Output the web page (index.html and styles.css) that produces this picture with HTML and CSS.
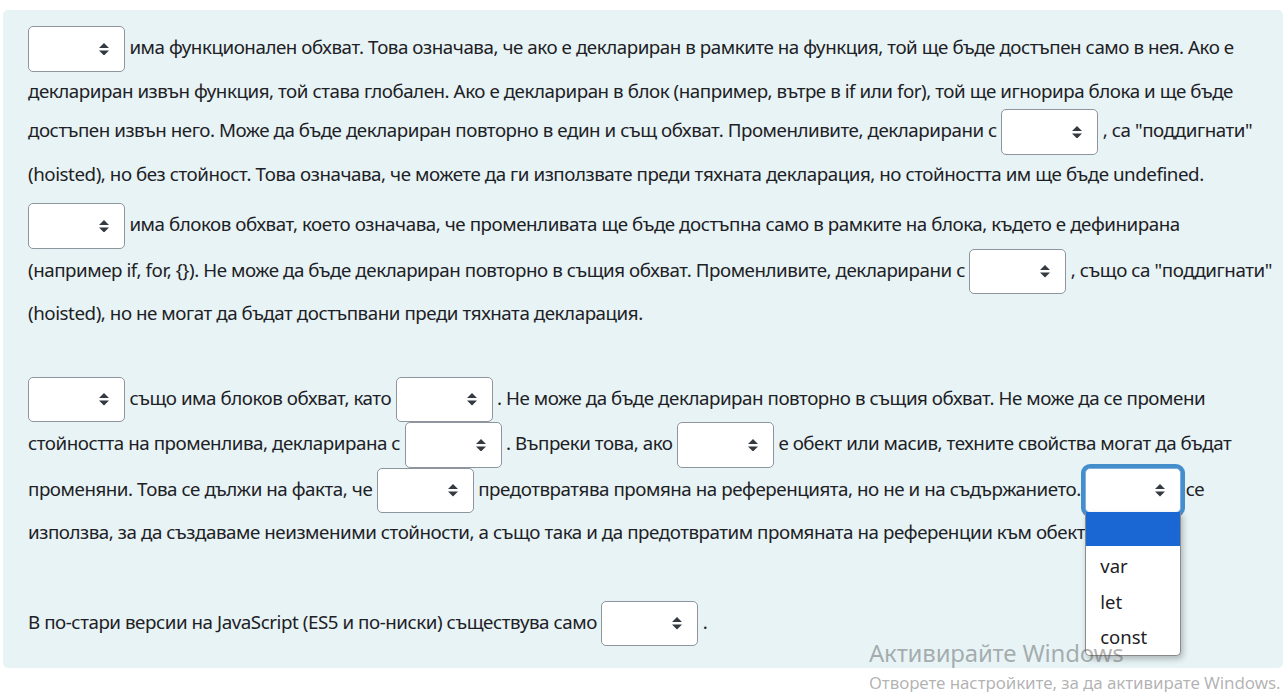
FILE: index.html
```html
<!DOCTYPE html>
<html lang="bg">
<head>
<meta charset="utf-8">
<title>Обхват на променливите</title>
<link rel="stylesheet" href="styles.css">
</head>
<body>
<div class="que">
  <p class="qtext"><span class="sel"><svg class="caret" viewBox="0 0 4 5"><path d="M2 0L0 2h4zm0 5L0 3h4z"/></svg></span> има функционален обхват. Това означава, че ако е деклариран в рамките на функция, той ще бъде достъпен само в нея. Ако е<br>деклариран извън функция, той става глобален. Ако е деклариран в блок (например, вътре в if или for), той ще игнорира блока и ще бъде<br>достъпен извън него. Може да бъде деклариран повторно в един и същ обхват. Променливите, декларирани с <span class="sel"><svg class="caret" viewBox="0 0 4 5"><path d="M2 0L0 2h4zm0 5L0 3h4z"/></svg></span> , са "поддигнати"<br>(hoisted), но без стойност. Това означава, че можете да ги използвате преди тяхната декларация, но стойността им ще бъде undefined.</p>
  <p class="qtext"><span class="sel"><svg class="caret" viewBox="0 0 4 5"><path d="M2 0L0 2h4zm0 5L0 3h4z"/></svg></span> има блоков обхват, което означава, че променливата ще бъде достъпна само в рамките на блока, където е дефинирана<br>(например if, for, {}). Не може да бъде деклариран повторно в същия обхват. Променливите, декларирани с <span class="sel"><svg class="caret" viewBox="0 0 4 5"><path d="M2 0L0 2h4zm0 5L0 3h4z"/></svg></span> , също са "поддигнати"<br>(hoisted), но не могат да бъдат достъпвани преди тяхната декларация.</p>
  <div class="blank"></div>
  <p class="qtext"><span class="sel"><svg class="caret" viewBox="0 0 4 5"><path d="M2 0L0 2h4zm0 5L0 3h4z"/></svg></span> също има блоков обхват, като <span class="sel"><svg class="caret" viewBox="0 0 4 5"><path d="M2 0L0 2h4zm0 5L0 3h4z"/></svg></span> . Не може да бъде деклариран повторно в същия обхват. Не може да се промени<br>стойността на променлива, декларирана с <span class="sel"><svg class="caret" viewBox="0 0 4 5"><path d="M2 0L0 2h4zm0 5L0 3h4z"/></svg></span> . Въпреки това, ако <span class="sel"><svg class="caret" viewBox="0 0 4 5"><path d="M2 0L0 2h4zm0 5L0 3h4z"/></svg></span> е обект или масив, техните свойства могат да бъдат<br>променяни. Това се дължи на факта, че <span class="sel"><svg class="caret" viewBox="0 0 4 5"><path d="M2 0L0 2h4zm0 5L0 3h4z"/></svg></span> предотвратява промяна на референцията, но не и на съдържанието. <span class="sel focus"><svg class="caret" viewBox="0 0 4 5"><path d="M2 0L0 2h4zm0 5L0 3h4z"/></svg><span class="menu"><span class="opt active"></span><span class="opt">var</span><span class="opt">let</span><span class="opt">const</span></span></span> се<br>използва, за да създаваме неизменими стойности, а също така и да предотвратим промяната на референции към обекти.</p>
  <div class="blank blank-lg"></div>
  <p class="qtext">В по-стари версии на JavaScript (ES5 и по-ниски) съществува само <span class="sel"><svg class="caret" viewBox="0 0 4 5"><path d="M2 0L0 2h4zm0 5L0 3h4z"/></svg></span> .</p>
</div>
<div class="watermark">
  <div class="wm-title">Активирайте Windows</div>
  <div class="wm-sub">Отворете настройките, за да активирате Windows.</div>
</div>
</body>
</html>
```
FILE: styles.css
```css
html, body {
  margin: 0;
  padding: 0;
  overflow: hidden;
  background: #ffffff;
}
body {
  font-family: "Noto Sans", "Open Sans", sans-serif;
  color: #1d2125;
  width: 1283px;
  height: 692px;
  position: relative;
}
.que {
  margin: 10px 0 0 3px;
  padding: 16px 0 11px 25px;
  background: #e7f3f5;
  border-radius: 5px;
}
.qtext {
  margin: 0 0 11px 0;
  font-size: 18.75px;
  letter-spacing: -0.45px;
  line-height: 37.5px;
  white-space: nowrap;
}
.blank {
  height: 34px;
}
.blank-lg {
  height: 39px;
}
.sel {
  display: inline-flex;
  align-items: center;
  justify-content: flex-end;
  box-sizing: border-box;
  width: 97px;
  height: 45.5px;
  padding-right: 15px;
  vertical-align: middle;
  background: #ffffff;
  border: 1px solid #8f959e;
  border-radius: 5px;
  position: relative;
  letter-spacing: 0;
}
.sel.focus {
  width: 96px;
  border-color: #7eaee0;
  box-shadow: 0 0 0 4px #458ecc;
}
.caret {
  width: 10px;
  height: 12.5px;
  fill: #343a40;
}
.menu {
  position: absolute;
  top: 100%;
  left: -1px;
  width: 94px;
  display: flex;
  flex-direction: column;
  background: #ffffff;
  border: 1px solid #8a8a8a;
  border-top: none;
  border-radius: 0 0 5px 5px;
  box-shadow: 2px 3px 6px rgba(0, 0, 0, 0.25);
  z-index: 5;
  line-height: 35.5px;
  font-size: 18.5px;
  color: #1d2125;
}
.opt {
  display: block;
  height: 35.5px;
  padding-left: 14px;
}
.opt.active {
  height: 34px;
  background: #1a66d2;
  margin-bottom: 2px;
}
.watermark {
  position: absolute;
  left: 869px;
  top: 636px;
  z-index: 10;
  font-family: "Noto Sans", "Open Sans", sans-serif;
  color: rgba(70, 70, 70, 0.42);
  pointer-events: none;
  white-space: nowrap;
}
.wm-title {
  font-size: 24px;
  line-height: 34px;
  letter-spacing: -0.2px;
}
.wm-sub {
  font-size: 17px;
  line-height: 25px;
  letter-spacing: -0.1px;
}
```
